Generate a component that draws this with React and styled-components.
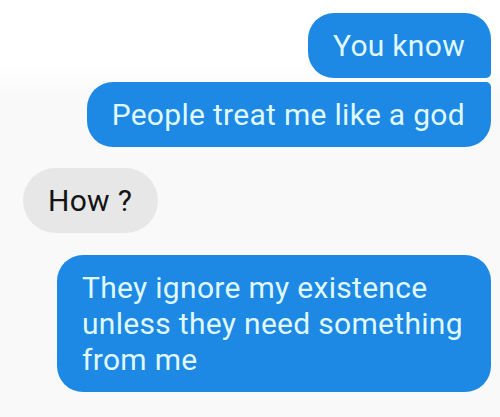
import React from "react";
import styled, { createGlobalStyle, css } from "styled-components";

const Global = createGlobalStyle`
  html, body {
    margin: 0;
    padding: 0;
    background: #fafafa;
  }
  body {
    font-family: Roboto, "Liberation Sans", Arial, sans-serif;
  }
`;

const Thread = styled.div`
  width: 500px;
  height: 417px;
  box-sizing: border-box;
  padding: 13px 9px 0 23px;
  display: flex;
  flex-direction: column;
  background: linear-gradient(#ffffff 0px, #ffffff 65px, #f9f9f9 95px, #f9f9f9 100%);
`;

const Row = styled.div`
  display: flex;
  justify-content: ${(p) => (p.$mine ? "flex-end" : "flex-start")};
  margin-top: ${(p) => p.$gap || 0}px;
`;

const Bubble = styled.div`
  box-sizing: border-box;
  padding: 15px 26px 14px 25px;
  font-size: 30px;
  line-height: 36px;
  letter-spacing: 0.3px;
  border-radius: 26px;
  max-width: 434px;
  ${(p) =>
    p.$mine
      ? css`
          background: #1e88e5;
          color: #dff9ff;
        `
      : css`
          background: #e7e7e7;
          color: #141414;
          border-radius: 33px;
        `}
  ${(p) =>
    p.$shape === "first" &&
    css`
      border-bottom-right-radius: 5px;
    `}
  ${(p) =>
    p.$shape === "last" &&
    css`
      border-top-right-radius: 5px;
    `}
`;

export default function App() {
  return (
    <>
      <Global />
      <Thread>
        <Row $mine>
          <Bubble $mine $shape="first">You know</Bubble>
        </Row>
        <Row $mine $gap={4}>
          <Bubble $mine $shape="last">People treat me like a god</Bubble>
        </Row>
        <Row $gap={21}>
          <Bubble>How ?</Bubble>
        </Row>
        <Row $mine $gap={22}>
          <Bubble $mine>
            They ignore my existence unless they need something from me
          </Bubble>
        </Row>
      </Thread>
    </>
  );
}
